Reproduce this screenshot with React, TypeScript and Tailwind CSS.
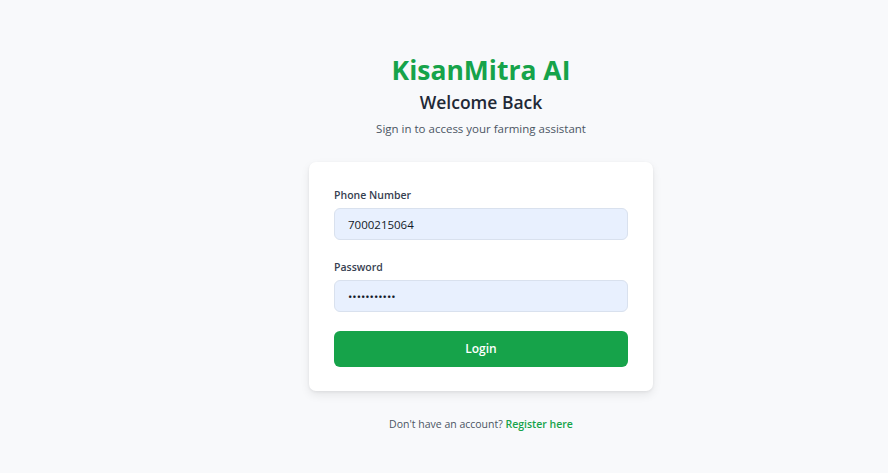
import React from 'react';

export default function App() {
  const [phone, setPhone] = React.useState('7000215064');
  const [password, setPassword] = React.useState('kisan@12345');

  return (
    <div
      className="min-h-screen bg-[#f8f9fb] flex flex-col items-center pt-[53px] pl-[74px]"
      style={{ fontFamily: '"Open Sans", "Noto Sans", sans-serif' }}
    >
      <h1 className="text-[26.5px] leading-[34px] font-bold text-[#16a34a]">KisanMitra AI</h1>
      <h2 className="mt-[2px] text-[17.5px] leading-[26px] font-semibold text-[#1f2937]">Welcome Back</h2>
      <p className="mt-[6px] text-[11.5px] leading-[16px] text-[#4b5563]">Sign in to access your farming assistant</p>

      <div className="mt-[25px] w-[344px] bg-white rounded-[7px] shadow-[0_4px_10px_rgba(0,0,0,0.08),0_1px_3px_rgba(0,0,0,0.06)] px-[25px] pt-[26px] pb-[24px]">
        <form className="flex flex-col" onSubmit={(e) => e.preventDefault()}>
          <label className="text-[10.5px] leading-[14px] font-semibold text-[#374151]">Phone Number</label>
          <input
            value={phone}
            onChange={(e) => setPhone(e.target.value)}
            className="mt-[6px] h-[32px] rounded-[6px] border border-[#d9e1ee] bg-[#e8f0fe] px-[13px] text-[11.5px] text-[#111827] outline-none"
          />

          <label className="mt-[20px] text-[10.5px] leading-[14px] font-semibold text-[#374151]">Password</label>
          <input
            type="password"
            value={password}
            onChange={(e) => setPassword(e.target.value)}
            className="mt-[6px] h-[32px] rounded-[6px] border border-[#d9e1ee] bg-[#e8f0fe] px-[13px] text-[11.5px] text-[#111827] outline-none"
          />

          <button
            type="submit"
            className="mt-[19px] h-[36px] rounded-[6px] bg-[#16a34a] text-white text-[12px] font-semibold"
          >
            Login
          </button>
        </form>
      </div>

      <p className="mt-[26px] text-[10.5px] leading-[14px] text-[#4b5563]">
        Don't have an account?{' '}
        <a href="#" className="font-semibold text-[#16a34a]">
          Register here
        </a>
      </p>
    </div>
  );
}
